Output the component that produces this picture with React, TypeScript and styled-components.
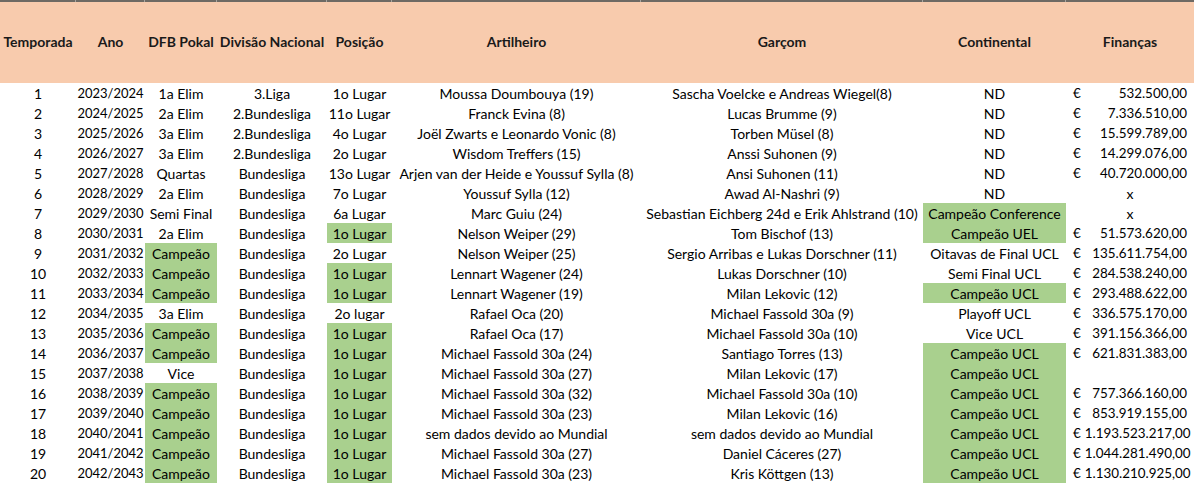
import React from "react";
import styled, { createGlobalStyle } from "styled-components";

const GlobalStyle = createGlobalStyle`
  html, body {
    margin: 0;
    padding: 0;
    background: #ffffff;
  }
  body {
    font-family: Lato, "Open Sans", sans-serif;
    color: #000;
  }
`;

const COLS = "76px 69px 72px 110px 65px 249px 282px 143px 128px";

const Sheet = styled.div`
  width: 1203px;
  height: 493px;
  overflow: hidden;
  background: #fff;
`;

const TopBand = styled.div`
  display: grid;
  grid-template-columns: ${COLS};
  width: 1194px;
  height: 2px;
  background: #6e6a64;
`;

const BandTick = styled.div`
  border-right: 1px solid #a9a6a0;
  &:last-child {
    border-right: none;
  }
`;

const HeaderRow = styled.div`
  display: grid;
  grid-template-columns: ${COLS};
  width: 1194px;
  height: 81px;
  background: #f8cbad;
`;

const HeadCell = styled.div`
  display: flex;
  align-items: center;
  justify-content: center;
  font-weight: 700;
  font-size: 14px;
  white-space: nowrap;
  color: #1a1a1a;
  padding-bottom: 2px;
`;

const Row = styled.div`
  display: grid;
  grid-template-columns: ${COLS};
  width: 1194px;
  height: 20px;
`;

const Cell = styled.div<{ $win?: boolean }>`
  display: flex;
  align-items: center;
  justify-content: center;
  font-size: 14px;
  white-space: nowrap;
  background: ${(p) => (p.$win ? "#a9d08e" : "transparent")};
`;

const YearCell = styled(Cell)`
  font-size: 13px;
`;

const MoneyCell = styled.div`
  display: flex;
  align-items: center;
  justify-content: space-between;
  gap: 4px;
  padding: 0 7px;
  font-size: 13.4px;
  white-space: nowrap;
`;

const Euro = styled.span`
  flex: none;
`;

const Amount = styled.span`
  text-align: right;
`;

const headers = [
  "Temporada",
  "Ano",
  "DFB Pokal",
  "Divisão Nacional",
  "Posição",
  "Artilheiro",
  "Garçom",
  "Continental",
  "Finanças",
];

type Season = {
  ano: string;
  pokal: string;
  liga: string;
  pos: string;
  art: string;
  gar: string;
  cont: string;
  fin: string;
  // which cells are highlighted: [pokal, pos, cont]
  hi: [boolean, boolean, boolean];
};

const seasons: Season[] = [
  { ano: "2023/2024", pokal: "1a Elim", liga: "3.Liga", pos: "1o Lugar", art: "Moussa Doumbouya (19)", gar: "Sascha Voelcke e Andreas Wiegel(8)", cont: "ND", fin: "532.500,00", hi: [false, false, false] },
  { ano: "2024/2025", pokal: "2a Elim", liga: "2.Bundesliga", pos: "11o Lugar", art: "Franck Evina (8)", gar: "Lucas Brumme (9)", cont: "ND", fin: "7.336.510,00", hi: [false, false, false] },
  { ano: "2025/2026", pokal: "3a Elim", liga: "2.Bundesliga", pos: "4o Lugar", art: "Joël Zwarts e Leonardo Vonic (8)", gar: "Torben Müsel (8)", cont: "ND", fin: "15.599.789,00", hi: [false, false, false] },
  { ano: "2026/2027", pokal: "3a Elim", liga: "2.Bundesliga", pos: "2o Lugar", art: "Wisdom Treffers (15)", gar: "Anssi Suhonen (9)", cont: "ND", fin: "14.299.076,00", hi: [false, false, false] },
  { ano: "2027/2028", pokal: "Quartas", liga: "Bundesliga", pos: "13o Lugar", art: "Arjen van der Heide e Youssuf Sylla (8)", gar: "Ansi Suhonen (11)", cont: "ND", fin: "40.720.000,00", hi: [false, false, false] },
  { ano: "2028/2029", pokal: "2a Elim", liga: "Bundesliga", pos: "7o Lugar", art: "Youssuf Sylla (12)", gar: "Awad Al-Nashri (9)", cont: "ND", fin: "x", hi: [false, false, false] },
  { ano: "2029/2030", pokal: "Semi Final", liga: "Bundesliga", pos: "6a Lugar", art: "Marc Guiu (24)", gar: "Sebastian Eichberg 24d e Erik Ahlstrand (10)", cont: "Campeão Conference", fin: "x", hi: [false, false, true] },
  { ano: "2030/2031", pokal: "2a Elim", liga: "Bundesliga", pos: "1o Lugar", art: "Nelson Weiper (29)", gar: "Tom Bischof (13)", cont: "Campeão UEL", fin: "51.573.620,00", hi: [false, true, true] },
  { ano: "2031/2032", pokal: "Campeão", liga: "Bundesliga", pos: "2o Lugar", art: "Nelson Weiper (25)", gar: "Sergio Arribas e Lukas Dorschner (11)", cont: "Oitavas de Final UCL", fin: "135.611.754,00", hi: [true, false, false] },
  { ano: "2032/2033", pokal: "Campeão", liga: "Bundesliga", pos: "1o Lugar", art: "Lennart Wagener (24)", gar: "Lukas Dorschner (10)", cont: "Semi Final UCL", fin: "284.538.240,00", hi: [true, true, false] },
  { ano: "2033/2034", pokal: "Campeão", liga: "Bundesliga", pos: "1o Lugar", art: "Lennart Wagener (19)", gar: "Milan Lekovic (12)", cont: "Campeão UCL", fin: "293.488.622,00", hi: [true, true, true] },
  { ano: "2034/2035", pokal: "3a Elim", liga: "Bundesliga", pos: "2o lugar", art: "Rafael Oca (20)", gar: "Michael Fassold 30a (9)", cont: "Playoff UCL", fin: "336.575.170,00", hi: [false, false, false] },
  { ano: "2035/2036", pokal: "Campeão", liga: "Bundesliga", pos: "1o Lugar", art: "Rafael Oca (17)", gar: "Michael Fassold 30a (10)", cont: "Vice UCL", fin: "391.156.366,00", hi: [true, true, false] },
  { ano: "2036/2037", pokal: "Campeão", liga: "Bundesliga", pos: "1o Lugar", art: "Michael Fassold 30a (24)", gar: "Santiago Torres (13)", cont: "Campeão UCL", fin: "621.831.383,00", hi: [true, true, true] },
  { ano: "2037/2038", pokal: "Vice", liga: "Bundesliga", pos: "1o Lugar", art: "Michael Fassold 30a (27)", gar: "Milan Lekovic (17)", cont: "Campeão UCL", fin: "", hi: [false, true, true] },
  { ano: "2038/2039", pokal: "Campeão", liga: "Bundesliga", pos: "1o Lugar", art: "Michael Fassold 30a (32)", gar: "Michael Fassold 30a (10)", cont: "Campeão UCL", fin: "757.366.160,00", hi: [true, true, true] },
  { ano: "2039/2040", pokal: "Campeão", liga: "Bundesliga", pos: "1o Lugar", art: "Michael Fassold 30a (23)", gar: "Milan Lekovic (16)", cont: "Campeão UCL", fin: "853.919.155,00", hi: [true, true, true] },
  { ano: "2040/2041", pokal: "Campeão", liga: "Bundesliga", pos: "1o Lugar", art: "sem dados devido ao Mundial", gar: "sem dados devido ao Mundial", cont: "Campeão UCL", fin: "1.193.523.217,00", hi: [true, true, true] },
  { ano: "2041/2042", pokal: "Campeão", liga: "Bundesliga", pos: "1o Lugar", art: "Michael Fassold 30a (27)", gar: "Daniel Cáceres (27)", cont: "Campeão UCL", fin: "1.044.281.490,00", hi: [true, true, true] },
  { ano: "2042/2043", pokal: "Campeão", liga: "Bundesliga", pos: "1o Lugar", art: "Michael Fassold 30a (23)", gar: "Kris Köttgen (13)", cont: "Campeão UCL", fin: "1.130.210.925,00", hi: [true, true, true] },
];

const Finance = ({ value }: { value: string }) => {
  if (!value) return <Cell />;
  if (value === "x") return <Cell>x</Cell>;
  return (
    <MoneyCell>
      <Euro>€</Euro>
      <Amount>{value}</Amount>
    </MoneyCell>
  );
};

const App = () => {
  return (
    <Sheet>
      <GlobalStyle />
      <TopBand>
        {headers.map((h) => (
          <BandTick key={h} />
        ))}
      </TopBand>
      <HeaderRow>
        {headers.map((h) => (
          <HeadCell key={h}>{h}</HeadCell>
        ))}
      </HeaderRow>
      {seasons.map((s, i) => (
        <Row key={s.ano}>
          <Cell>{i + 1}</Cell>
          <YearCell>{s.ano}</YearCell>
          <Cell $win={s.hi[0]}>{s.pokal}</Cell>
          <Cell>{s.liga}</Cell>
          <Cell $win={s.hi[1]}>{s.pos}</Cell>
          <Cell>{s.art}</Cell>
          <Cell>{s.gar}</Cell>
          <Cell $win={s.hi[2]}>{s.cont}</Cell>
          <Finance value={s.fin} />
        </Row>
      ))}
    </Sheet>
  );
};

export default App;
